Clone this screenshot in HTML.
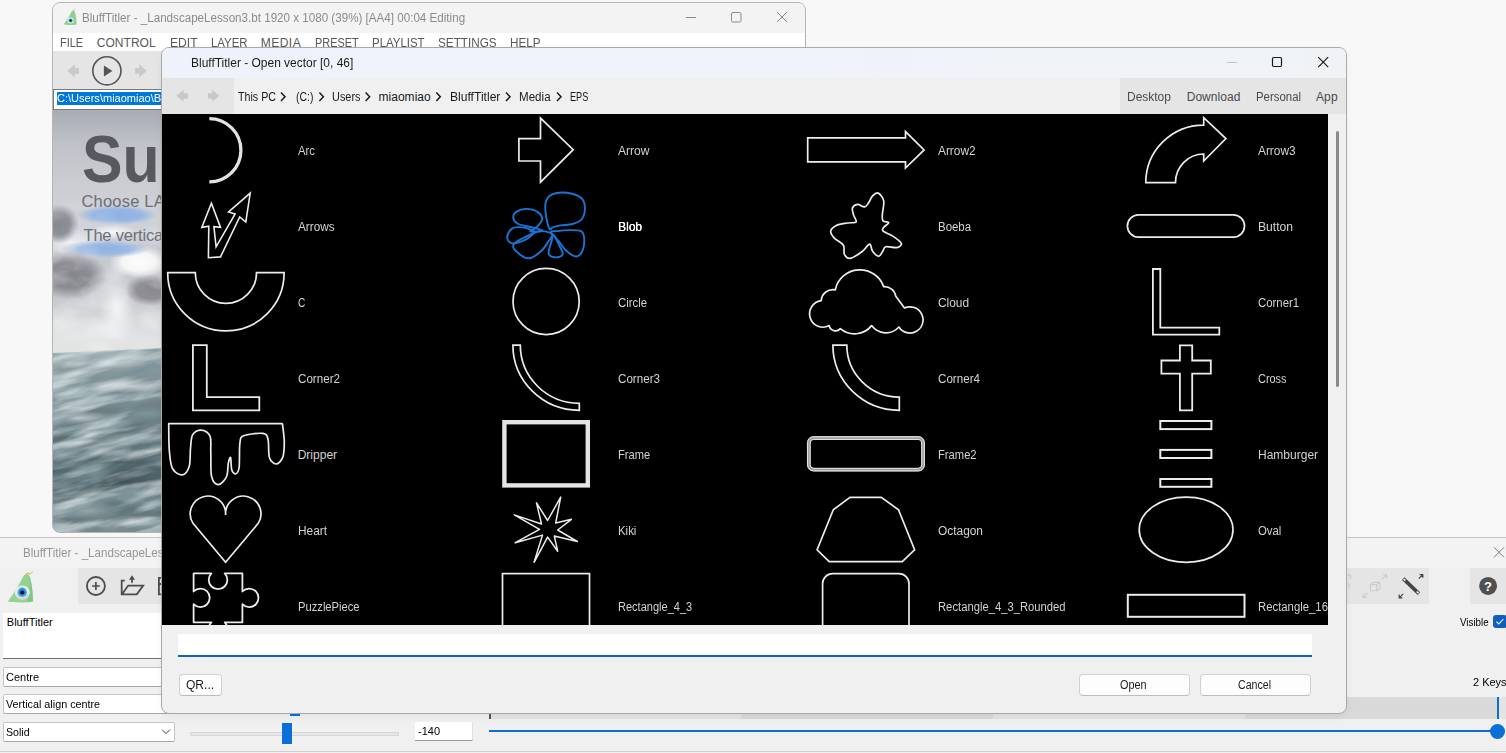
<!DOCTYPE html>
<html><head><meta charset="utf-8"><title>BluffTitler - Open vector</title>
<style>
*{box-sizing:border-box;margin:0;padding:0}
html,body{width:1506px;height:753px;overflow:hidden;background:#f8f8f8;font-family:"Liberation Sans",sans-serif;font-size:12px;color:#1a1a1a}
body{position:relative}
.a{position:absolute}
.t{position:absolute;white-space:nowrap;line-height:14px;height:14px}
svg{position:absolute;overflow:visible}
/* main window */
#main{position:absolute;left:52px;top:2px;width:754px;height:531px;border:1px solid #b4b4b4;border-radius:8px;background:#f0f0f0;overflow:hidden}
#main .title{position:absolute;left:0;top:0;width:100%;height:30px;background:#f3f3f3}
#main .menu{position:absolute;left:0;top:30px;width:100%;height:18px;background:#fff}
#main .tool{position:absolute;left:0;top:48px;width:100%;height:39px;background:#e5e5e5}
#main .path{position:absolute;left:0;top:86px;width:752px;height:21px;background:#fff;border:1px solid #7a7a7a}
#main .sel{position:absolute;left:4px;top:89px;width:200px;height:13px;background:#0078d7}
#main .photo{position:absolute;left:0;top:107px;width:752px;height:423px;overflow:hidden;background:#b9bcc3}
/* bottom panel */
#panel{position:absolute;left:0;top:537px;width:1506px;height:216px;background:#f0f0f0;border-top:1px solid #c4c4c4}
#panel .ptitle{position:absolute;left:0;top:0;width:100%;height:30px;background:#f3f3f3}
.strip{position:absolute;background:#e5e5e5;top:30px;height:36px}
.combo{position:absolute;left:3px;height:20px;background:#fff;border:1px solid #c4c4c4;border-bottom-color:#a8a8a8;border-radius:2px}
/* dialog */
#dlg{position:absolute;left:161px;top:47px;width:1186px;height:667px;border:1px solid #a9a9a9;border-radius:8px;background:#f0f0f0;overflow:hidden}
#dshadow{position:absolute;left:162px;top:48px;width:1184px;height:665px;border-radius:8px;box-shadow:0 3px 10px rgba(0,0,0,.06)}
#dlg .title{position:absolute;left:0;top:0;width:100%;height:30px;background:linear-gradient(90deg,#eef3fb 0,#eff3fa 50%,#f0f3f6 100%)}
#dlg .navl{position:absolute;left:0;top:30px;width:72px;height:36px;background:#e5e5e5}
#dlg .navr{position:absolute;left:958px;top:30px;width:230px;height:36px;background:#e5e5e5}
#dlg .list{position:absolute;left:0;top:66px;width:1166px;height:511px;background:#000;overflow:hidden}
#dlg .sb{position:absolute;left:1174px;top:83px;width:3px;height:256px;background:#8a8a8a;border-radius:2px}
#dlg .inp{position:absolute;left:16px;top:586px;width:1134px;height:23px;background:#fff;border-bottom:2px solid #0a64c2}
.btn{position:absolute;top:626px;height:22px;background:#fdfdfd;border:1px solid #d0d0d0;border-bottom-color:#bdbdbd;border-radius:4px}
</style></head><body>
<div id="main">
 <div class="title"></div><div class="menu"></div><div class="tool"></div><div class="path"></div><div class="sel"></div>
 <div class="photo"><div class="a" style="left:0;top:0;width:752px;height:244px;background:
radial-gradient(ellipse 40px 10px at 64px 105px,#8cafe3 0,#97b6e4 60%,rgba(151,182,228,0) 100%),
radial-gradient(ellipse 44px 9px at 52px 139px,#8fb1e3 0,#9bb9e4 55%,rgba(155,185,228,0) 100%),
radial-gradient(ellipse 26px 7px at 60px 122px,#f6f7f9 0,rgba(246,247,249,0) 100%),
radial-gradient(ellipse 20px 20px at 6px 114px,#86888f 0,#8f9198 55%,rgba(143,145,152,0) 100%),
radial-gradient(ellipse 38px 24px at 16px 165px,#85858c 0,#8c8c93 55%,rgba(140,140,147,0) 100%),
radial-gradient(ellipse 26px 16px at 98px 180px,#89898f 0,#909096 55%,rgba(144,144,150,0) 100%),
radial-gradient(ellipse 30px 16px at 86px 152px,#fdfdfd 0,#f6f6f7 55%,rgba(246,246,247,0) 100%),
radial-gradient(ellipse 18px 40px at 64px 200px,#f3f4f5 0,rgba(243,244,245,0) 100%),
radial-gradient(ellipse 34px 12px at 18px 132px,#eceef1 0,rgba(236,238,241,0) 100%),
radial-gradient(ellipse 60px 22px at 30px 226px,#e6e7e8 0,rgba(230,231,232,0) 100%),
linear-gradient(#a9acb4 0,#bfc2c8 14%,#cbcdd2 30%,#cfd1d6 40%,#cdd1d8 50%,#c6c9ce 62%,#c4c6ca 76%,#d9dadc 86%,#e6e7e7 100%)"></div>
<div class="a" style="left:0;top:240px;width:752px;height:183px;background:
radial-gradient(ellipse 60px 5px at 40px 14px,rgba(205,216,219,.8) 0,rgba(205,216,219,0) 100%),
radial-gradient(ellipse 50px 7px at 76px 36px,rgba(222,230,232,.75) 0,rgba(222,230,232,0) 100%),
radial-gradient(ellipse 44px 7px at 26px 68px,rgba(222,230,232,.7) 0,rgba(222,230,232,0) 100%),
radial-gradient(ellipse 40px 6px at 84px 88px,rgba(215,225,228,.6) 0,rgba(215,225,228,0) 100%),
radial-gradient(ellipse 46px 22px at 62px 132px,rgba(52,68,74,.7) 0,rgba(52,68,74,0) 100%),
radial-gradient(ellipse 40px 9px at 30px 160px,rgba(210,220,224,.55) 0,rgba(210,220,224,0) 100%),
radial-gradient(ellipse 40px 7px at 90px 172px,rgba(215,224,228,.6) 0,rgba(215,224,228,0) 100%),
linear-gradient(#b3bfc2 0,#9aa9ad 6%,#88989d 12%,#7a8c92 22%,#61747a 42%,#4e6268 62%,#566a70 80%,#76878c 100%)"></div>
<div class="a" style="left:0;top:228px;width:120px;height:22px;background:linear-gradient(177.6deg,rgba(226,227,227,0) 0,#e2e3e3 35%,#e2e3e3 57%,#b4c0c3 61%,#a3b1b5 100%)"></div>
<svg style="left:0;top:236px" width="124" height="190" viewBox="0 0 124 190">
<filter id="fw" x="0" y="0" width="100%" height="100%"><feTurbulence type="fractalNoise" baseFrequency="0.014 0.085" numOctaves="4" seed="7"/><feColorMatrix type="matrix" values="0 0 0 0 0.82  0 0 0 0 0.88  0 0 0 0 0.9  2.6 0 0 0 -1.08"/></filter>
<filter id="fd" x="0" y="0" width="100%" height="100%"><feTurbulence type="fractalNoise" baseFrequency="0.02 0.07" numOctaves="3" seed="21"/><feColorMatrix type="matrix" values="0 0 0 0 0.2  0 0 0 0 0.29  0 0 0 0 0.32  0 2.4 0 0 -0.85"/></filter>
<clipPath id="oc"><path d="M0,7 L124,1.6 V190 H0Z"/></clipPath><g clip-path="url(#oc)"><g transform="rotate(-14 62 95)"><rect x="-60" y="-40" width="260" height="290" filter="url(#fd)"/><rect x="-60" y="-40" width="260" height="290" filter="url(#fw)" opacity=".75"/></g></g>
</svg>
<svg style="left:0;top:0" width="124" height="240" viewBox="0 0 124 240">
<filter id="fc" x="0" y="0" width="100%" height="100%"><feTurbulence type="fractalNoise" baseFrequency="0.03 0.045" numOctaves="4" seed="11"/><feColorMatrix type="matrix" values="0 0 0 0 1  0 0 0 0 1  0 0 0 0 1  1.5 0 0 0 -0.62"/></filter>
<linearGradient id="mg" x1="0" y1="0" x2="0" y2="1"><stop offset="0" stop-color="#000"/><stop offset=".35" stop-color="#000"/><stop offset=".55" stop-color="#fff"/><stop offset="1" stop-color="#fff"/></linearGradient><mask id="mk"><rect x="0" y="0" width="124" height="240" fill="url(#mg)"/></mask><g mask="url(#mk)"><rect x="0" y="0" width="124" height="240" filter="url(#fc)" opacity=".5"/></g>
</svg>
<span class="t" style="left:28.6px;top:14.6px;font-size:67.5px;line-height:67.5px;height:67.5px;font-weight:bold;color:#57595e;letter-spacing:0;transform:scaleX(.9);transform-origin:0 0">Su</span>
<span class="t" style="left:28.5px;top:82px;font-size:16.5px;line-height:18px;height:18px;color:#6c6e72;letter-spacing:.2px">Choose LAYER</span>
<span class="t" style="left:30.5px;top:116.3px;font-size:16.5px;line-height:18px;height:18px;color:#6e7074;letter-spacing:-.2px">The vertical</span>
</div>
</div>
<svg style="left:0;top:0" width="1506" height="120" viewBox="0 0 1506 120" fill="none">
 <!-- app icon -->
 <path d="M72.4,11 C73.2,10.3 74.3,10.6 74.8,11.7 C75.9,14.6 76.5,19.8 76.6,24.5 C73,25.2 67,25.2 63.5,24.6 C66.8,20.2 69.6,15.6 71.6,11.8 C71.8,11.4 72.1,11.2 72.4,11Z" fill="#8fd08f"/>
 <path d="M73.2,10.8 C73.8,9.6 74.6,9.8 75.2,9.2" stroke="#c9b23a" stroke-width=".8"/>
 <circle cx="70.6" cy="20.6" r="3" fill="#eef2f4"/><circle cx="70.6" cy="20.6" r="2" fill="#2f8fd6"/><circle cx="70.6" cy="20.6" r="1" fill="#111"/>
 <!-- window controls (inactive) -->
 <path d="M685.7,17.5 H696" stroke="#8a8a8a" stroke-width="1"/>
 <rect x="731.5" y="12.5" width="9.5" height="9.5" rx="1.5" stroke="#8a8a8a" stroke-width="1"/>
 <path d="M777,12 L787,22 M787,12 L777,22" stroke="#8a8a8a" stroke-width="1"/>
 <!-- toolbar -->
 <path d="M67.2,70.8 L74.9,64.3 V68 H79 V73.8 H74.9 V77.6Z" fill="#c9c9c9"/>
 <path d="M146.9,70.8 L139.2,64.3 V68 H135.1 V73.8 H139.2 V77.6Z" fill="#c9c9c9"/>
 <circle cx="106.9" cy="70.8" r="14.1" stroke="#555" stroke-width="1.6"/>
 <path d="M103.9,65.6 L112.4,71 L103.9,76.4Z" fill="#555"/>
</svg>

<div id="panel">
 <div class="ptitle"></div>
 <div class="strip" style="left:78px;width:1351px"></div>
 <div class="strip" style="left:1470px;width:36px"></div>
 <div class="a" style="left:3px;top:75px;width:400px;height:46px;background:#fff;border-bottom:1px solid #6e6e6e"></div>
 <div class="combo" style="top:129px;width:400px"></div>
 <div class="combo" style="top:156px;width:400px"></div>
 <div class="combo" style="top:184px;width:172px"></div>
 <div class="a" style="left:190px;top:194px;width:209px;height:4px;background:#e7e7e7;border:1px solid #d6d6d6"></div>
 <div class="a" style="left:282px;top:185px;width:10px;height:21px;background:#0a6fd6"></div>
 <div class="a" style="left:290px;top:172px;width:10px;height:6px;background:#0a6fd6"></div>
 <div class="a" style="left:415px;top:184px;width:58px;height:19px;background:#fff;border-bottom:1px solid #9a9a9a;border-right:1px solid #e0e0e0"></div>
 <div class="a" style="left:489px;top:159px;width:1017px;height:22px;background:linear-gradient(90deg,#e4e4e4 0,#e4e4e4 252px,#d9d9d9 252px,#d9d9d9 504px,#e4e4e4 504px,#e4e4e4 756px,#d9d9d9 756px,#d9d9d9 1008px,#e4e4e4 1008px)"></div>
 <div class="a" style="left:489px;top:175px;width:2px;height:6px;background:#555"></div>
 <div class="a" style="left:489px;top:192px;width:1010px;height:2px;background:#0a6fd6"></div>
 <div class="a" style="left:1497px;top:159px;width:2px;height:22px;background:#0a6fd6"></div>
 <div class="a" style="left:1490px;top:186px;width:15px;height:15px;border-radius:50%;background:#0a6fd6"></div>
 <div class="a" style="left:1493px;top:77px;width:14px;height:13px;border-radius:3px;background:#0f5fc0"></div>
 <div class="a" style="left:0;top:213px;width:1506px;height:1px;background:#cfcfcf"></div>
</div>
<svg style="left:0;top:0" width="1506" height="753" viewBox="0 0 1506 753" fill="none">
 <!-- logo -->
 <path d="M24.8,574.8 C26.4,573.4 28.6,574 29.6,576.2 C31.8,582 32.9,592 33.1,601.4 C26,602.7 14,602.7 7.8,601.5 C14,593 19.4,584 23.2,576.4 C23.6,575.6 24.2,575.1 24.8,574.8Z" fill="#93d392"/>
 <path d="M28.6,575 C31.4,581 32.8,591 33.1,601.4 C31,601.9 29,602.2 27,602.3 C30,594 30.4,584 28.6,575Z" fill="#7cc17c" opacity=".7"/>
 <path d="M26.4,575 C26,573 27.6,572.4 29,573.6 C30.2,574.4 31.6,573.2 32.4,571.6" stroke="#cdb73a" stroke-width="1"/>
 <ellipse cx="22.3" cy="592.6" rx="7.5" ry="7.1" fill="#e9eced"/>
 <ellipse cx="22.6" cy="596" rx="6.6" ry="3.8" fill="#c9cfd0" opacity=".6"/>
 <circle cx="22.2" cy="592.2" r="4.6" fill="#39a2ea"/><circle cx="22.2" cy="592.2" r="3" fill="#1f86d6"/>
 <circle cx="22.3" cy="592.4" r="2" fill="#0c0c0c"/>
 <!-- plus -->
 <circle cx="95.9" cy="586" r="9" stroke="#4c4c4c" stroke-width="1.8"/>
 <path d="M92,586 H99.8 M95.9,582.1 V589.9" stroke="#4c4c4c" stroke-width="1.7"/>
 <!-- folder -->
 <path d="M124.8,580.6 H121.7 V594.3 H136.8 L143.2,585.6 H128.2 L122.2,594" stroke="#4c4c4c" stroke-width="1.8" stroke-linejoin="miter"/>
 <path d="M132,575.2 L135,579.8 H129Z M131.1,579.6 H132.9 V582.8 H131.1Z" fill="#4c4c4c"/>
 <!-- third icon (mostly hidden) -->
 <path d="M164,577.8 H158.9 V594.4 H164 M158.9,584 H164" stroke="#4c4c4c" stroke-width="1.8"/>
 <!-- close -->
 <path d="M1494,547.3 L1504,557.3 M1504,547.3 L1494,557.3" stroke="#7a7a7a" stroke-width="1"/>
 <!-- cube (disabled) -->
 <g stroke="#cbcbcb" stroke-width="1.1">
  <path d="M1370.4,584.6 L1373.4,582.4 H1379.8 V588.6 L1376.8,590.8 H1370.4Z M1370.4,584.6 H1376.8 V590.8 M1376.8,584.6 L1379.8,582.4"/>
  <path d="M1382,579.4 L1386.4,575 M1383,574.8 H1386.6 V578.4 M1367.6,592.8 L1363.2,597.2 M1363,593.8 V597.4 H1366.6"/>
  <path d="M1346,575 L1350.4,575 V578.6 M1346,584 H1349 V588"/>
 </g>
 <!-- expand (ruler) -->
 <path d="M1403.2,578.6 L1418.9,593.6" stroke="#444" stroke-width="3.6"/>
 <path d="M1403.6,579 L1405.4,580.7 M1416.7,591.5 L1418.5,593.2" stroke="#f4f4f4" stroke-width="1.6"/>
 <path d="M1418.8,578.6 L1422.6,574.8 M1419.6,574.6 H1422.8 V577.8" stroke="#444" stroke-width="1.2"/>
 <path d="M1403.2,593.8 L1399.4,597.6 M1399.2,594.6 V597.8 H1402.4" stroke="#444" stroke-width="1.2"/>
 <!-- help -->
 <circle cx="1488.1" cy="585.9" r="9" fill="#505050"/>
 <text x="1488.1" y="590.6" font-family="Liberation Sans, sans-serif" font-weight="bold" font-size="13" fill="#fff" text-anchor="middle">?</text>
 <!-- check -->
 <path d="M1496.4,621.6 L1498.8,624 L1503.4,619" stroke="#fff" stroke-width="1.1"/>
 <!-- combo chevron -->
 <path d="M162,729.6 L166,733.6 L170,729.6" stroke="#444" stroke-width="1"/>
</svg>

<span class="t" id="t28" style="left:82.1px;top:10.5px;font-size:12px;color:#8b8b8b;transform:scaleX(0.9684);transform-origin:0 0;">BluffTitler - _LandscapeLesson3.bt 1920 x 1080 (39%) [AA4] 00:04 Editing</span>
<span class="t" id="t29" style="left:60.2px;top:35.8px;font-size:12px;color:#585858;transform:scaleX(0.9115);transform-origin:0 0;">FILE</span>
<span class="t" id="t30" style="left:96.7px;top:35.8px;font-size:12px;color:#585858;letter-spacing:0.055px;">CONTROL</span>
<span class="t" id="t31" style="left:169.7px;top:35.8px;font-size:12px;color:#585858;transform:scaleX(1.0094);transform-origin:0 0;">EDIT</span>
<span class="t" id="t32" style="left:210.7px;top:35.8px;font-size:12px;color:#585858;transform:scaleX(0.9514);transform-origin:0 0;">LAYER</span>
<span class="t" id="t33" style="left:260.7px;top:35.8px;font-size:12px;color:#585858;letter-spacing:0.496px;">MEDIA</span>
<span class="t" id="t34" style="left:314.7px;top:35.8px;font-size:12px;color:#585858;transform:scaleX(0.9080);transform-origin:0 0;">PRESET</span>
<span class="t" id="t35" style="left:371.7px;top:35.8px;font-size:12px;color:#585858;transform:scaleX(0.9539);transform-origin:0 0;">PLAYLIST</span>
<span class="t" id="t36" style="left:437.7px;top:35.8px;font-size:12px;color:#585858;transform:scaleX(0.9764);transform-origin:0 0;">SETTINGS</span>
<span class="t" id="t37" style="left:509.7px;top:35.8px;font-size:12px;color:#585858;transform:scaleX(0.9758);transform-origin:0 0;">HELP</span>
<span class="t" id="t50" style="left:57.0px;top:91.4px;font-size:11px;color:#fff;transform:scaleX(1.0023);transform-origin:0 0;">C:\Users\miaomiao\</span>
<span class="t" id="t51" style="left:153.7px;top:91.4px;font-size:11px;color:#fff;">BluffTitler</span>
<span class="t" id="t55" style="left:22.9px;top:546.0px;font-size:12px;color:#969696;transform:scaleX(0.9665);transform-origin:0 0;">BluffTitler - _LandscapeLesson3.bt</span>
<span class="t" id="t56" style="left:6.8px;top:615.0px;font-size:11px;color:#000;letter-spacing:0.014px;">BluffTitler</span>
<span class="t" id="t57" style="left:5.7px;top:670.3px;font-size:11px;color:#000;transform:scaleX(1.0021);transform-origin:0 0;">Centre</span>
<span class="t" id="t58" style="left:5.7px;top:697.3px;font-size:11px;color:#000;transform:scaleX(0.9802);transform-origin:0 0;">Vertical align centre</span>
<span class="t" id="t59" style="left:5.7px;top:725.3px;font-size:11px;color:#000;transform:scaleX(0.9645);transform-origin:0 0;">Solid</span>
<span class="t" id="t60" style="left:417.9px;top:724.3px;font-size:11px;color:#000;transform:scaleX(1.0031);transform-origin:0 0;">-140</span>
<span class="t" id="t61" style="left:1460.2px;top:615.0px;font-size:11px;color:#000;transform:scaleX(0.8877);transform-origin:0 0;">Visible</span>
<span class="t" id="t62" style="left:1473.4px;top:675.0px;font-size:11px;color:#000;transform:scaleX(0.9988);transform-origin:0 0;">2 Keys</span>
<div id="dshadow"></div>
<div id="dlg">
 <div class="title"></div><div class="navl"></div><div class="navr"></div>
 <div class="list" id="list">
  <svg style="left:0;top:0" width="1166" height="511" viewBox="162 114 1166 511" fill="none">
<path d="M209.3,118.6 A31.6,31.6 0 0 1 209.3,181.8" stroke="#e2e2e2" stroke-width="3.3" stroke-linecap="butt"/>
<path d="M211.4,203.2 L220.5,227.4 L213.9,226.6 L216.1,246.8 L235.1,213.9 L228.6,211.9 L250.2,193.1 L245.8,222.0 L239.7,216.9 L220.5,256.9 L208.4,257.7 L208.8,226.2 L201.8,227.4Z" stroke="#ececec" stroke-width="1.6" />
<path d="M167.7,272.7 H195.3 A30.6,30.6 0 0 0 256.5,272.7 H284.1 A58.2,58.2 0 0 1 167.7,272.7Z" stroke="#ececec" stroke-width="1.7" />
<path d="M192.9,345.1 H206.8 V397.2 H259.3 V410.3 H192.9Z" stroke="#ececec" stroke-width="1.8" />
<path d="M168.7,423.7 L282.1,423.7 L282.5,424.1 C282.8,427.1 284.3,436.6 284.3,442.2 C284.3,447.8 284.1,453.8 282.7,457.4 C281.3,461.0 278.2,464.0 276.0,464.0 C273.8,464.0 270.7,461.5 269.4,457.4 C268.1,453.3 269.1,443.2 268.0,439.2 C266.9,435.2 266.9,434.0 262.9,433.4 C258.8,432.8 247.5,434.2 243.7,435.8 C239.9,437.4 240.7,437.9 239.9,443.2 C239.1,448.5 239.8,462.4 239.1,467.5 C238.4,472.6 237.1,473.3 235.9,473.7 C234.7,474.1 232.7,472.8 231.8,470.1 C230.9,467.4 231.2,458.8 230.6,457.6 C230.0,456.4 229.1,459.7 228.4,462.8 C227.7,465.9 228.2,472.9 226.6,476.5 C224.9,480.1 221.0,484.6 218.5,484.6 C216.0,484.6 212.9,481.9 211.6,476.5 C210.3,471.1 211.1,459.0 210.8,452.3 C210.5,445.6 211.6,439.9 210.0,436.2 C208.4,432.5 204.3,430.4 201.4,430.1 C198.5,429.8 194.5,431.6 192.7,434.6 C190.9,437.6 191.1,443.0 190.5,448.3 C189.9,453.6 190.6,462.1 189.2,466.5 C187.8,470.9 185.0,474.6 182.2,474.9 C179.4,475.2 174.7,472.6 172.5,468.5 C170.3,464.4 169.9,457.7 169.3,450.3 C168.7,442.9 168.8,428.5 168.7,424.1Z" stroke="#ececec" stroke-width="1.7" stroke-linejoin="round"/>
<path d="M225.6,562.3 L193.2,523.6 A17.7,17.7 0 1 1 225.6,514.9 A17.7,17.7 0 1 1 258,523.6Z" stroke="#ececec" stroke-width="1.7" stroke-linejoin="miter"/>
<path d="M193.6,573.4 H211.4 A9.3,9.3 0 1 0 224.7,573.4 H242.4 V591.5 A9.3,9.3 0 1 1 242.4,604.2 V622.3 H224.7 A9.3,9.3 0 1 1 211.4,622.3 H193.6 V604.2 A9.3,9.3 0 1 0 193.6,591.5Z" stroke="#ececec" stroke-width="1.8" stroke-linejoin="round"/>
<path d="M518.9,138.6 L540.5,138.6 L540.5,118.1 L573.2,149.7 L540.5,182.2 L540.5,161.0 L518.9,161.0Z" stroke="#ececec" stroke-width="1.7" />
<path d="M549.6,229.1 C548.5,227.3 546.9,221.3 546.2,216.9 C545.5,212.5 544.7,206.5 545.6,202.8 C546.5,199.1 548.1,196.4 551.6,194.7 C555.1,193.0 561.9,192.2 566.8,192.7 C571.7,193.2 577.9,195.4 580.9,197.8 C583.9,200.2 584.7,203.4 584.9,206.9 C585.1,210.4 583.9,216.2 581.9,219.0 C579.9,221.8 576.3,222.9 572.8,224.0 C569.3,225.1 564.1,224.8 560.7,225.4 C557.3,226.0 554.5,226.8 552.6,227.4 C550.8,228.0 550.7,230.8 549.6,229.1Z" stroke="#1b74d2" stroke-width="1.9" />
<path d="M542.5,230.7 C542.9,230.0 536.5,228.5 532.5,227.4 C528.5,226.3 521.5,225.6 518.3,224.0 C515.1,222.4 513.6,220.0 513.3,218.0 C513.0,216.0 514.1,213.4 516.3,211.9 C518.5,210.4 522.9,208.9 526.4,208.9 C529.9,208.9 534.9,210.2 537.5,211.9 C540.1,213.6 542.2,216.5 542.1,219.0 C542.0,221.5 538.9,224.9 536.9,227.0 C534.9,229.1 529.5,230.9 530.4,231.5 C531.3,232.1 542.1,231.4 542.5,230.7Z" stroke="#1b74d2" stroke-width="1.9" />
<path d="M533.5,231.1 C532.0,229.8 526.0,227.8 522.4,227.4 C518.8,227.0 514.4,227.0 511.9,228.6 C509.4,230.2 507.3,234.7 507.2,237.1 C507.1,239.5 508.8,242.5 511.3,243.2 C513.8,243.9 519.0,242.5 522.4,241.2 C525.8,239.9 529.5,237.2 531.4,235.5 C533.2,233.8 535.0,232.4 533.5,231.1Z" stroke="#1b74d2" stroke-width="1.9" />
<path d="M533.5,233.1 C528.8,235.2 517.1,240.5 514.3,243.6 C511.5,246.7 514.3,249.2 516.7,251.7 C519.1,254.1 524.8,258.4 528.8,258.3 C532.8,258.2 537.6,254.2 540.9,251.3 C544.2,248.5 546.7,244.0 548.6,241.2 C550.5,238.4 553.2,236.0 552.2,234.3 C551.2,232.6 545.6,231.3 542.5,231.1 C539.4,230.9 538.2,231.0 533.5,233.1Z" stroke="#1b74d2" stroke-width="1.9" />
<path d="M551.8,240.2 C551.1,243.4 548.1,250.5 548.6,253.3 C549.1,256.2 552.4,257.1 554.7,257.3 C557.1,257.5 562.1,256.9 562.7,254.5 C563.3,252.2 559.9,246.6 558.3,243.2 C556.7,239.8 554.1,234.8 553.0,234.3 C551.9,233.8 552.5,237.0 551.8,240.2Z" stroke="#1b74d2" stroke-width="1.9" />
<path d="M551.0,232.3 C551.3,234.0 556.1,238.0 558.7,241.2 C561.3,244.4 563.8,248.8 566.8,251.3 C569.8,253.9 574.2,256.8 576.9,256.5 C579.6,256.2 581.7,252.8 582.9,249.6 C584.1,246.4 584.4,240.6 584.1,237.5 C583.8,234.4 583.4,232.3 580.9,231.1 C578.4,229.9 573.2,230.1 569.2,230.1 C565.2,230.1 559.7,230.7 556.7,231.1 C553.7,231.5 550.7,230.6 551.0,232.3Z" stroke="#1b74d2" stroke-width="1.9" />
<circle cx="546.1" cy="301.5" r="33.1" stroke="#ececec" stroke-width="1.7"/>
<path d="M512.9,345.1 H520.3 A59,58.2 0 0 0 579.3,403.3 V410.3 A66.4,65.2 0 0 1 512.9,345.1Z" stroke="#ececec" stroke-width="1.7" />
<rect x="504.4" y="422.2" width="83.4" height="63.2" stroke="#e4e4e4" stroke-width="4.4"/>
<path d="M560.7,497.1 L555.7,523.0 L571.4,519.3 L557.7,530.0 L577.3,541.5 L554.3,536.1 L557.7,551.2 L547.6,537.1 L534.1,562.3 L542.5,535.1 L515.3,542.7 L539.5,529.4 L514.3,514.9 L541.5,524.0 L536.5,502.8 L547.6,520.5Z" stroke="#ececec" stroke-width="1.5" stroke-linejoin="round"/>
<rect x="502.5" y="573.6" width="87" height="65.2" stroke="#ececec" stroke-width="1.7"/>
<path d="M807.7,137.8 L905.5,137.8 L905.5,131.6 L924.1,149.9 L905.5,168.1 L905.5,161.8 L807.7,161.8Z" stroke="#ececec" stroke-width="1.7" />
<path d="M878.3,193.1 C880.1,193.9 883.0,197.2 883.7,200.8 C884.4,204.4 882.4,211.5 882.3,214.9 C882.2,218.3 882.0,219.7 883.1,221.0 C884.2,222.3 888.7,221.5 888.8,222.6 C888.9,223.7 884.7,226.0 883.7,227.4 C882.8,228.8 881.6,229.7 883.1,231.1 C884.6,232.5 889.8,234.1 892.8,236.1 C895.8,238.1 900.6,241.3 901.3,243.2 C902.0,245.1 899.5,247.0 896.9,247.6 C894.3,248.2 888.2,246.2 885.8,246.8 C883.4,247.4 883.9,249.7 882.7,251.3 C881.5,252.9 880.4,256.3 878.7,256.3 C877.0,256.3 874.1,253.3 872.6,251.3 C871.1,249.3 871.3,244.2 869.6,244.2 C867.9,244.2 865.7,249.0 862.5,251.3 C859.3,253.7 853.4,257.8 850.4,258.3 C847.4,258.8 845.6,256.5 844.4,254.3 C843.2,252.1 845.1,247.9 843.4,245.2 C841.7,242.5 836.4,240.4 834.3,238.1 C832.2,235.8 830.4,233.2 830.7,231.1 C831.0,229.0 833.5,226.8 836.3,225.4 C839.1,224.1 844.1,223.6 847.4,223.0 C850.7,222.4 855.1,223.3 856.1,222.0 C857.1,220.7 854.1,217.2 853.5,214.9 C852.9,212.6 851.8,209.7 852.5,207.9 C853.2,206.2 855.5,204.6 857.5,204.4 C859.5,204.2 862.8,207.2 864.6,206.9 C866.5,206.6 867.3,204.7 868.6,202.8 C869.9,201.0 871.0,197.4 872.6,195.8 C874.2,194.2 876.4,192.3 878.3,193.1Z" stroke="#ececec" stroke-width="1.7" />
<path d="M835.3,289.8 A25.2,25.2 0 0 1 883.7,286.6 A11.5,11.5 0 0 1 895.8,296.3 L904.5,308.0 A13.1,13.1 0 1 1 898.9,327.0 A17.6,17.6 0 0 1 871.6,325.6 A21.9,21.9 0 0 1 840.3,328.6 A6.4,6.4 0 0 1 829.2,325.6 A13.3,13.3 0 1 1 821.2,300.7 A11.8,11.8 0 0 1 835.3,289.8Z" stroke="#ececec" stroke-width="1.7" stroke-linejoin="round"/>
<path d="M832.9,345.1 H846.8 A52.5,52.1 0 0 0 899.3,397.2 V410.3 A66.4,65.2 0 0 1 832.9,345.1Z" stroke="#ececec" stroke-width="1.7" />
<rect x="808.7" y="437.9" width="114.5" height="31.9" rx="5" stroke="#9a9a9a" stroke-width="3.6"/>
<rect x="807.6" y="436.8" width="116.7" height="34.1" rx="6" stroke="#ececec" stroke-width="1"/>
<rect x="810.2" y="439.4" width="111.5" height="28.9" rx="3.6" stroke="#ececec" stroke-width="1"/>
<path d="M850,497.3 L881.3,497.3 L898.5,509.8 L914.6,549.8 L902.3,561.7 L829.2,561.7 L817.1,549.8 L833.3,509.8Z" stroke="#ececec" stroke-width="1.7" />
<rect x="822.6" y="573.6" width="86.4" height="65" rx="10" stroke="#ececec" stroke-width="1.7"/>
<path d="M1145.8,182.6 A57.9,57.5 0 0 1 1203.7,125.1 V117.7 L1225.9,138.6 L1203.7,161 V154 A28.3,28.6 0 0 0 1175.5,182.6Z" stroke="#ececec" stroke-width="1.7" />
<rect x="1127.4" y="214.9" width="117.1" height="22.2" rx="11.1" stroke="#ececec" stroke-width="1.7"/>
<path d="M1152.9,269 H1160.3 V327.6 H1219.3 V334.6 H1152.9Z" stroke="#ececec" stroke-width="1.8" />
<path d="M1179.9,345.3 H1192.2 V360.5 H1210.8 V373.6 H1192.2 V410.3 H1179.9 V373.6 H1161.4 V360.5 H1179.9Z" stroke="#ececec" stroke-width="1.8" />
<rect x="1160.3" y="421" width="51.1" height="8.1" stroke="#ececec" stroke-width="2"/>
<rect x="1160.3" y="449.9" width="51.1" height="8.1" stroke="#ececec" stroke-width="2"/>
<rect x="1160.3" y="479" width="51.1" height="7.8" stroke="#ececec" stroke-width="2"/>
<ellipse cx="1186.1" cy="529.7" rx="46.9" ry="32.6" stroke="#ececec" stroke-width="1.7"/>
<rect x="1127.8" y="594.8" width="116.7" height="22" stroke="#ececec" stroke-width="2"/>
  </svg>
<span class="t" id="t0" style="left:135.7px;top:29.5px;font-size:12px;color:#d2d2d2;transform:scaleX(0.9389);transform-origin:0 0;">Arc</span>
<span class="t" id="t1" style="left:455.7px;top:29.5px;font-size:12px;color:#d2d2d2;transform:scaleX(1.0050);transform-origin:0 0;">Arrow</span>
<span class="t" id="t2" style="left:775.7px;top:29.5px;font-size:12px;color:#d2d2d2;transform:scaleX(0.9891);transform-origin:0 0;">Arrow2</span>
<span class="t" id="t3" style="left:1095.7px;top:29.5px;font-size:12px;color:#d2d2d2;transform:scaleX(0.9891);transform-origin:0 0;">Arrow3</span>
<span class="t" id="t4" style="left:135.7px;top:105.5px;font-size:12px;color:#d2d2d2;transform:scaleX(0.9801);transform-origin:0 0;">Arrows</span>
<span class="t" id="t5" style="left:455.7px;top:105.5px;font-size:12px;color:#ffffff;transform:scaleX(0.9987);transform-origin:0 0;text-shadow:.3px 0 0 #fff;">Blob</span>
<span class="t" id="t6" style="left:775.7px;top:105.5px;font-size:12px;color:#d2d2d2;transform:scaleX(0.9538);transform-origin:0 0;">Boeba</span>
<span class="t" id="t7" style="left:1095.7px;top:105.5px;font-size:12px;color:#d2d2d2;transform:scaleX(1.0114);transform-origin:0 0;">Button</span>
<span class="t" id="t8" style="left:135.7px;top:181.5px;font-size:12px;color:#d2d2d2;transform:scaleX(0.8418);transform-origin:0 0;">C</span>
<span class="t" id="t9" style="left:455.7px;top:181.5px;font-size:12px;color:#d2d2d2;transform:scaleX(0.9488);transform-origin:0 0;">Circle</span>
<span class="t" id="t10" style="left:775.7px;top:181.5px;font-size:12px;color:#d2d2d2;transform:scaleX(0.9917);transform-origin:0 0;">Cloud</span>
<span class="t" id="t11" style="left:1095.7px;top:181.5px;font-size:12px;color:#d2d2d2;transform:scaleX(0.9502);transform-origin:0 0;">Corner1</span>
<span class="t" id="t12" style="left:135.7px;top:257.5px;font-size:12px;color:#d2d2d2;transform:scaleX(0.9686);transform-origin:0 0;">Corner2</span>
<span class="t" id="t13" style="left:455.7px;top:257.5px;font-size:12px;color:#d2d2d2;transform:scaleX(0.9686);transform-origin:0 0;">Corner3</span>
<span class="t" id="t14" style="left:775.7px;top:257.5px;font-size:12px;color:#d2d2d2;transform:scaleX(0.9686);transform-origin:0 0;">Corner4</span>
<span class="t" id="t15" style="left:1095.7px;top:257.5px;font-size:12px;color:#d2d2d2;transform:scaleX(0.9093);transform-origin:0 0;">Cross</span>
<span class="t" id="t16" style="left:135.7px;top:333.5px;font-size:12px;color:#d2d2d2;letter-spacing:0.007px;">Dripper</span>
<span class="t" id="t17" style="left:455.7px;top:333.5px;font-size:12px;color:#d2d2d2;transform:scaleX(0.9258);transform-origin:0 0;">Frame</span>
<span class="t" id="t18" style="left:775.7px;top:333.5px;font-size:12px;color:#d2d2d2;transform:scaleX(0.9336);transform-origin:0 0;">Frame2</span>
<span class="t" id="t19" style="left:1095.7px;top:333.5px;font-size:12px;color:#d2d2d2;transform:scaleX(1.0011);transform-origin:0 0;">Hamburger</span>
<span class="t" id="t20" style="left:135.7px;top:409.5px;font-size:12px;color:#d2d2d2;transform:scaleX(0.9917);transform-origin:0 0;">Heart</span>
<span class="t" id="t21" style="left:455.7px;top:409.5px;font-size:12px;color:#d2d2d2;transform:scaleX(0.9512);transform-origin:0 0;">Kiki</span>
<span class="t" id="t22" style="left:775.7px;top:409.5px;font-size:12px;color:#d2d2d2;transform:scaleX(0.9917);transform-origin:0 0;">Octagon</span>
<span class="t" id="t23" style="left:1095.7px;top:409.5px;font-size:12px;color:#d2d2d2;transform:scaleX(0.9478);transform-origin:0 0;">Oval</span>
<span class="t" id="t24" style="left:135.7px;top:485.5px;font-size:12px;color:#d2d2d2;transform:scaleX(0.9327);transform-origin:0 0;">PuzzlePiece</span>
<span class="t" id="t25" style="left:455.7px;top:485.5px;font-size:12px;color:#d2d2d2;transform:scaleX(0.9191);transform-origin:0 0;">Rectangle_4_3</span>
<span class="t" id="t26" style="left:775.7px;top:485.5px;font-size:12px;color:#d2d2d2;transform:scaleX(0.9374);transform-origin:0 0;">Rectangle_4_3_Rounded</span>
<span class="t" id="t27" style="left:1095.7px;top:485.5px;font-size:12px;color:#d2d2d2;transform:scaleX(0.9450);transform-origin:0 0;">Rectangle_16_9</span>
 </div>
 <div class="sb"></div>
 <div class="inp"></div>
 <div class="btn" style="left:17px;width:43px"></div>
 <div class="btn" style="left:917px;width:111px"></div>
 <div class="btn" style="left:1038px;width:111px"></div>
</div>
<svg style="left:0;top:0" width="1506" height="753" viewBox="0 0 1506 753" fill="none">
 <path d="M1227,62.5 H1237" stroke="#c4c4c4" stroke-width="1"/>
 <rect x="1272.5" y="57.5" width="9" height="9" rx="1.2" stroke="#1a1a1a" stroke-width="1.2"/>
 <path d="M1318.2,57.2 L1328.2,67.2 M1328.2,57.2 L1318.2,67.2" stroke="#1a1a1a" stroke-width="1.2"/>
 <path d="M176.3,95.8 L183.6,89.8 V93.2 H187.9 V98.4 H183.6 V101.8Z" fill="#c8c8c8"/>
 <path d="M219.4,95.8 L212.1,89.8 V93.2 H207.8 V98.4 H212.1 V101.8Z" fill="#c8c8c8"/>
 <g stroke="#1a1a1a" stroke-width="1.5" stroke-linejoin="miter">
  <path d="M281,92.6 L285,96.8 L281,101"/>
  <path d="M319.4,92.6 L323.4,96.8 L319.4,101"/>
  <path d="M365.6,92.6 L369.6,96.8 L365.6,101"/>
  <path d="M436.3,92.6 L440.3,96.8 L436.3,101"/>
  <path d="M506,92.6 L510,96.8 L506,101"/>
  <path d="M557,92.6 L561,96.8 L557,101"/>
 </g>
</svg>

<span class="t" id="t38" style="left:190.9px;top:55.8px;font-size:12px;color:#1a1a1a;transform:scaleX(0.9972);transform-origin:0 0;">BluffTitler - Open vector [0, 46]</span>
<span class="t" id="t39" style="left:237.5px;top:89.6px;font-size:12px;color:#1a1a1a;transform:scaleX(0.8902);transform-origin:0 0;">This PC</span>
<span class="t" id="t40" style="left:296.4px;top:89.6px;font-size:12px;color:#1a1a1a;transform:scaleX(0.8700);transform-origin:0 0;">(C:)</span>
<span class="t" id="t41" style="left:331.7px;top:89.6px;font-size:12px;color:#1a1a1a;transform:scaleX(0.9093);transform-origin:0 0;">Users</span>
<span class="t" id="t42" style="left:378.5px;top:89.6px;font-size:12px;color:#1a1a1a;letter-spacing:0.024px;">miaomiao</span>
<span class="t" id="t43" style="left:450.2px;top:89.6px;font-size:12px;color:#1a1a1a;transform:scaleX(1.0077);transform-origin:0 0;">BluffTitler</span>
<span class="t" id="t44" style="left:519.3px;top:89.6px;font-size:12px;color:#1a1a1a;transform:scaleX(0.9667);transform-origin:0 0;">Media</span>
<span class="t" id="t45" style="left:570.1px;top:89.6px;font-size:12px;color:#1a1a1a;transform:scaleX(0.7620);transform-origin:0 0;">EPS</span>
<span class="t" id="t46" style="left:1127.2px;top:89.6px;font-size:12px;color:#4a4a4a;transform:scaleX(0.9970);transform-origin:0 0;">Desktop</span>
<span class="t" id="t47" style="left:1186.7px;top:89.6px;font-size:12px;color:#4a4a4a;letter-spacing:0.046px;">Download</span>
<span class="t" id="t48" style="left:1256.2px;top:89.6px;font-size:12px;color:#4a4a4a;transform:scaleX(0.9520);transform-origin:0 0;">Personal</span>
<span class="t" id="t49" style="left:1315.9px;top:89.6px;font-size:12px;color:#4a4a4a;letter-spacing:0.220px;">App</span>
<span class="t" id="t52" style="left:185.9px;top:678.2px;font-size:12px;color:#1a1a1a;transform:scaleX(1.0030);transform-origin:0 0;">QR...</span>
<span class="t" id="t53" style="left:1119.6px;top:678.2px;font-size:12px;color:#1a1a1a;transform:scaleX(0.9060);transform-origin:0 0;">Open</span>
<span class="t" id="t54" style="left:1237.7px;top:678.2px;font-size:12px;color:#1a1a1a;transform:scaleX(0.8860);transform-origin:0 0;">Cancel</span>
</body></html>
